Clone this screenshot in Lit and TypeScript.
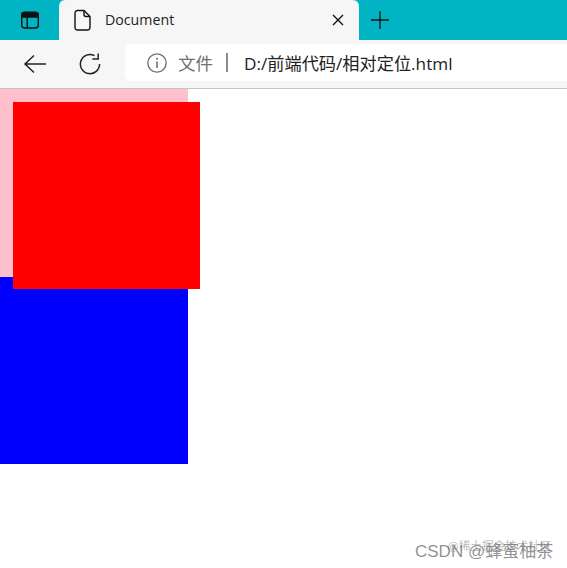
import { LitElement, html, css } from "lit";
import { customElement } from "lit/decorators.js";

@customElement("app-root")
export class AppRoot extends LitElement {
  static styles = css`
    :host { display: block; width: 567px; height: 568px; position: relative; overflow: hidden; background: #fff; font-family: "Open Sans", "Noto Sans CJK SC", sans-serif; }
    .strip { height: 40px; background: #00b4c3; display: flex; box-sizing: border-box; }
    .winicon { width: 59px; display: flex; align-items: center; justify-content: center; box-sizing: border-box; }
    .tab { width: 300px; height: 40px; background: #f6f6f6; border-radius: 6px 6px 0 0; display: flex; align-items: center; box-sizing: border-box; padding-left: 15px; color: #222; }
    .tab .label { margin-left: 13px; margin-top: -2px; font-size: 14.2px; }
    .tab .close { margin-left: auto; margin-right: 15px; display: flex; }
    .plus { margin-left: 11px; display: flex; align-items: center; }
    .toolbar { height: 48px; background: #f6f6f6; border-bottom: 1px solid #c4c4c4; display: flex; align-items: center; }
    .nav { display: flex; align-items: center; padding-left: 23px; gap: 32px; width: 125px; box-sizing: border-box; }
    .address { flex: 1; height: 37px; margin-top: -3px; background: #fff; border-radius: 6px 0 0 6px; display: flex; align-items: center; padding-left: 22px; font-size: 17.5px; }
    .address .file { margin-left: 11px; color: #6f6f6f; }
    .address .sep { width: 2px; height: 19px; background: #8c8c8c; margin: 0 16px 0 13px; }
    .address .url { color: #222; font-size: 17.2px; }
    .page { position: relative; }
    .pink { width: 188px; height: 188px; background: #ffc0cb; }
    .blue { width: 188px; height: 187px; background: #0000ff; }
    .red { position: absolute; left: 13px; top: 13px; width: 187px; height: 187px; background: #ff0000; }
    .wm { position: absolute; white-space: nowrap; font-family: "Liberation Sans", "Noto Sans CJK SC", sans-serif; }
    .wm1 { left: 447px; top: 537px; font-size: 11.6px; color: rgba(120,120,120,0.5); }
    .wm2 { left: 415px; top: 537px; font-size: 17px; color: rgba(110,110,110,0.75); }
  `;

  render() {
    return html`
      <div class="strip">
        <div class="winicon">
          <svg width="20" height="20" viewBox="0 0 20 20" fill="none" stroke="#111" stroke-width="1.4">
            <rect x="1.7" y="2.2" width="16.6" height="15.8" rx="3"></rect>
            <path d="M2 3.5h16v3.5H2z" fill="#111"></path>
            <path d="M7.2 7v11"></path>
          </svg>
        </div>
        <div class="tab">
          <svg width="18" height="22" viewBox="0 0 18 22" fill="none" stroke="#111" stroke-width="1.4" stroke-linejoin="round">
            <path d="M3.5 1.5h6.5l6 6v11a2.5 2.5 0 0 1-2.5 2.5h-10A2.5 2.5 0 0 1 1 18.5V4a2.5 2.5 0 0 1 2.5-2.5z"></path>
            <path d="M10 1.5v4a2 2 0 0 0 2 2h4"></path>
          </svg>
          <span class="label">Document</span>
          <span class="close">
            <svg width="12" height="12" viewBox="0 0 12 12" stroke="#111" stroke-width="1.4"><path d="M1 1l10 10M11 1L1 11"></path></svg>
          </span>
        </div>
        <div class="plus">
          <svg width="20" height="20" viewBox="0 0 20 20" stroke="#111" stroke-width="1.3"><path d="M10 1v18M1 10h18"></path></svg>
        </div>
      </div>
      <div class="toolbar">
        <div class="nav">
          <svg width="24" height="20" viewBox="0 0 24 20" fill="none" stroke="#222" stroke-width="1.5"><path d="M23 10H2M11 1.5L2 10l9 8.5"></path></svg>
          <svg width="22" height="22" viewBox="0 0 22 22" fill="none" stroke="#222" stroke-width="1.5"><path d="M15.5 2.6A9.6 9.6 0 1 0 20.6 11"></path><path d="M19.2 0.5v5.6h-5.8"></path></svg>
        </div>
        <div class="address">
          <svg width="20" height="20" viewBox="0 0 20 20" fill="none" stroke="#6f6f6f" stroke-width="1.3"><circle cx="10" cy="10" r="9.2"></circle><path d="M10 8.5v6.5" stroke-width="1.6"></path><circle cx="10" cy="5.8" r="1" fill="#6f6f6f" stroke="none"></circle></svg>
          <span class="file">文件</span>
          <span class="sep"></span>
          <span class="url">D:/前端代码/相对定位.html</span>
        </div>
      </div>
      <div class="page">
        <div class="pink"></div>
        <div class="blue"></div>
        <div class="red"></div>
      </div>
      <div class="wm wm1">@稀土掘金技术社区</div>
      <div class="wm wm2">CSDN @蜂蜜柚茶</div>
    `;
  }
}
